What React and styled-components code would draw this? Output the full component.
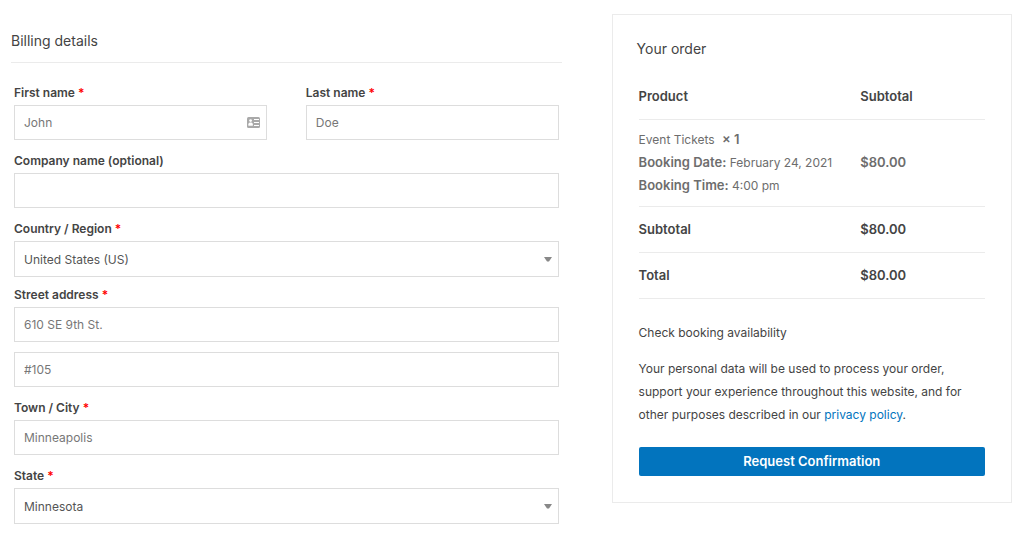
import React, { useId } from "react";
import styled, { createGlobalStyle } from "styled-components";

const GlobalStyle = createGlobalStyle`
  *, *::before, *::after { box-sizing: border-box; }
  body {
    margin: 0;
    background: #fff;
    color: #444;
    font-family: Inter, "Liberation Sans", sans-serif;
    font-size: 12px;
    line-height: 23px;
  }
  input, select, button { font: inherit; }
`;

const Page = styled.form`
  display: grid;
  grid-template-columns: minmax(0, 11fr) minmax(0, 8fr);
  align-items: start;
  gap: 50px;
  padding: 14px 12px 8px 11px;
`;

const Heading = styled.h3`
  margin: 0;
  font-size: 14px;
  line-height: 20px;
  font-weight: 400;
`;

const Billing = styled.section`
  padding-top: 17px;
`;

const BillingHeading = styled(Heading)`
  padding-bottom: 11px;
  border-bottom: 1px solid #ebebeb;
`;

const Fields = styled.div`
  padding: 22px 3px 0;
`;

const NameRow = styled.div`
  display: grid;
  grid-template-columns: 1fr 1fr;
  gap: 39px;
`;

const FieldBox = styled.div`
  display: flex;
  flex-direction: column;
  margin-bottom: ${(p) => (p.$tight ? 10 : 13)}px;
`;

const Label = styled.label`
  margin-bottom: 4px;
  line-height: 16px;
  font-weight: 600;
`;

const Required = styled.abbr`
  color: #f00;
  text-decoration: none;
`;

const Control = styled.div`
  position: relative;
  display: flex;
`;

const TextInput = styled.input`
  width: 100%;
  height: 35px;
  padding: 0 9px;
  border: 1px solid #ddd;
  border-radius: 0;
  background: #fff;
  color: #444;
  outline-color: #0274be;

  &::placeholder {
    color: #777;
    opacity: 1;
  }
`;

const SelectInput = styled.select`
  width: 100%;
  height: 36px;
  padding: 0 28px 0 9px;
  appearance: none;
  border: 1px solid #ddd;
  border-radius: 0;
  background: #fff;
  color: #555;
`;

const Adornment = styled.svg`
  position: absolute;
  top: 0;
  bottom: 0;
  right: 7px;
  margin: auto 0;
  pointer-events: none;
`;

const Order = styled.section`
  padding: 24px 24px 26px;
  border: 1px solid #ebebeb;
`;

const OrderBody = styled.div`
  padding: 15px 2px 0;
`;

const Table = styled.table`
  width: 100%;
  table-layout: fixed;
  border-collapse: separate;
  border-spacing: 0;
  text-align: left;
`;

const Cell = styled.td`
  width: ${(p) => (p.$wide ? "64%" : "36%")};
  padding: ${(p) => (p.$item ? "8px 0 9px" : "11px 0")};
  border-bottom: 1px solid #ebebeb;
  color: ${(p) => (p.$item ? "#6d6d6d" : "inherit")};
  font-size: ${(p) => (p.$bold ? 13 : 12)}px;
  font-weight: ${(p) => (p.$bold ? 600 : 400)};
  vertical-align: middle;
`;

const ItemLine = styled.div`
  height: 23px;
`;

const Strong = styled.strong`
  font-size: 13px;
  font-weight: 600;
`;

const Quantity = styled(Strong)`
  margin-left: 4px;
`;

const Text = styled.p`
  margin: ${(p) => p.$top}px 0 0;
`;

const Link = styled.a`
  color: #0274be;
  text-decoration: none;
`;

const Submit = styled.button`
  display: block;
  width: 100%;
  height: 29px;
  margin-top: 21px;
  padding: 0;
  border: 0;
  border-radius: 2px;
  background: #0274be;
  color: #fff;
  font-size: 13px;
  font-weight: 600;
  cursor: pointer;
`;

function CardIcon() {
  return (
    <Adornment width="13" height="11" viewBox="0 0 13 11" aria-hidden="true">
      <rect width="13" height="11" rx="1.5" fill="#a9a9a9" />
      <circle cx="3.6" cy="3.6" r="1.4" fill="#fff" />
      <path d="M1.4 8.8V7.2c0-1 .9-1.7 2.2-1.7s2.2.7 2.2 1.7v1.6z" fill="#fff" />
      <path d="M7 2.5H12M7 5.5H12M7 8.5H12" stroke="#fff" strokeWidth="1" />
    </Adornment>
  );
}

function Arrow() {
  return (
    <Adornment width="8" height="5" viewBox="0 0 8 5" aria-hidden="true">
      <path d="M0 0h8L5 4.4H3z" fill="#888" />
    </Adornment>
  );
}

function FieldLabel({ htmlFor, required, children }) {
  return (
    <Label htmlFor={htmlFor}>
      {children}
      {required && <> <Required title="required">*</Required></>}
    </Label>
  );
}

function TextField({ label, required, icon, ...input }) {
  const id = useId();
  return (
    <FieldBox>
      <FieldLabel htmlFor={id} required={required}>{label}</FieldLabel>
      <Control>
        <TextInput id={id} type="text" {...input} />
        {icon}
      </Control>
    </FieldBox>
  );
}

function SelectField({ label, option }) {
  const id = useId();
  return (
    <FieldBox $tight>
      <FieldLabel htmlFor={id} required>{label}</FieldLabel>
      <Control>
        <SelectInput id={id}>
          <option>{option}</option>
        </SelectInput>
        <Arrow />
      </Control>
    </FieldBox>
  );
}

const AddressLines = styled.div`
  display: grid;
  gap: 10px;
`;

function AddressField() {
  const id = useId();
  return (
    <FieldBox>
      <FieldLabel htmlFor={id} required>Street address</FieldLabel>
      <AddressLines>
        <TextInput id={id} type="text" placeholder="610 SE 9th St." />
        <TextInput type="text" placeholder="#105" aria-label="Apartment, suite, unit" />
      </AddressLines>
    </FieldBox>
  );
}

function SummaryRow({ label, amount }) {
  return (
    <tr>
      <Cell as="th" scope="row" $wide $bold>{label}</Cell>
      <Cell $bold>{amount}</Cell>
    </tr>
  );
}

export default function App() {
  return (
    <>
      <GlobalStyle />
      <Page onSubmit={(e) => e.preventDefault()}>
        <Billing>
          <BillingHeading>Billing details</BillingHeading>
          <Fields>
            <NameRow>
              <TextField label="First name" required placeholder="John" icon={<CardIcon />} />
              <TextField label="Last name" required placeholder="Doe" />
            </NameRow>
            <TextField label="Company name (optional)" />
            <SelectField label="Country / Region" option="United States (US)" />
            <AddressField />
            <TextField label="Town / City" required placeholder="Minneapolis" />
            <SelectField label="State" option="Minnesota" />
          </Fields>
        </Billing>

        <Order>
          <Heading>Your order</Heading>
          <OrderBody>
            <Table>
              <thead>
                <tr>
                  <Cell as="th" scope="col" $wide $bold>Product</Cell>
                  <Cell as="th" scope="col" $bold>Subtotal</Cell>
                </tr>
              </thead>
              <tbody>
                <tr>
                  <Cell $wide $item>
                    <ItemLine>Event Tickets <Quantity>× 1</Quantity></ItemLine>
                    <ItemLine><Strong>Booking Date:</Strong> February 24, 2021</ItemLine>
                    <ItemLine><Strong>Booking Time:</Strong> 4:00 pm</ItemLine>
                  </Cell>
                  <Cell $item $bold>$80.00</Cell>
                </tr>
              </tbody>
              <tfoot>
                <SummaryRow label="Subtotal" amount="$80.00" />
                <SummaryRow label="Total" amount="$80.00" />
              </tfoot>
            </Table>
            <Text $top={22}>Check booking availability</Text>
            <Text $top={13}>
              Your personal data will be used to process your order, support your experience
              throughout this website, and for other purposes described in
              our <Link href="#privacy">privacy policy</Link>.
            </Text>
            <Submit type="submit">Request Confirmation</Submit>
          </OrderBody>
        </Order>
      </Page>
    </>
  );
}
